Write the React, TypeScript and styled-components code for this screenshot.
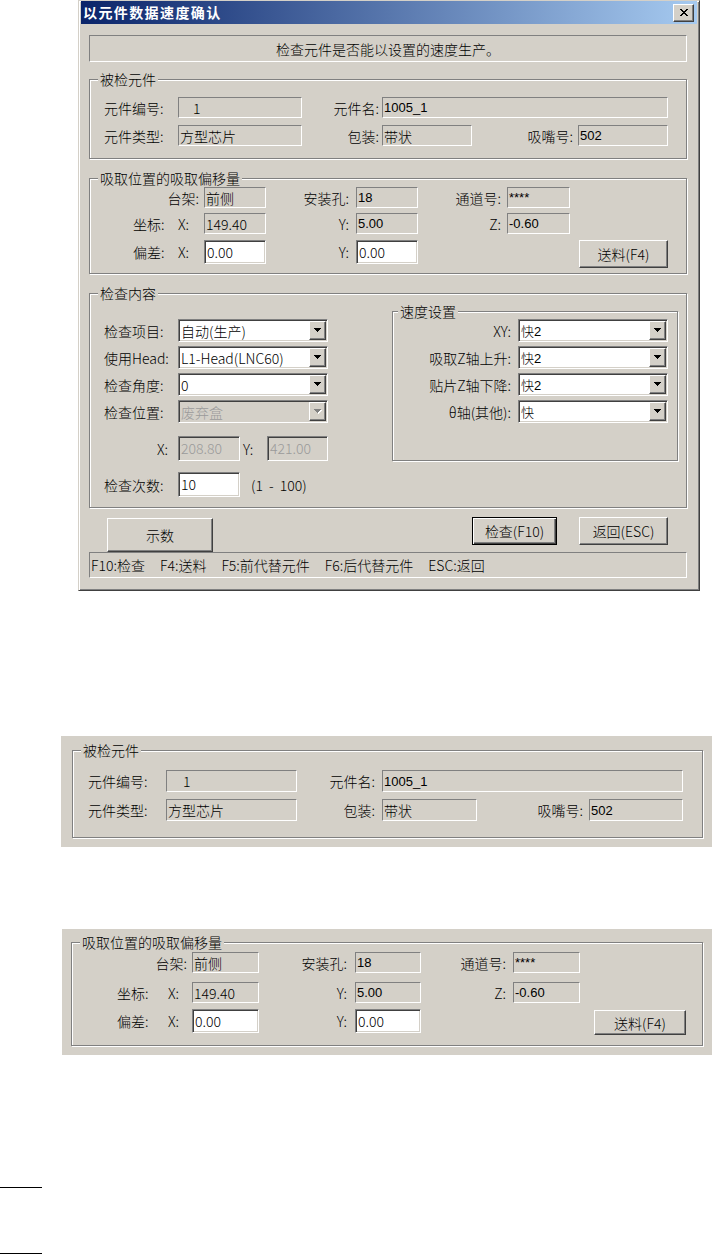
import React from "react";
import styled, { createGlobalStyle, css } from "styled-components";

const FACE = "#d4d0c8";
const GRAY = "#9a9a9a";
const SANS = `"Liberation Sans", "Noto Sans CJK SC", sans-serif`;

const GlobalStyle = createGlobalStyle`
  html, body { margin: 0; padding: 0; background: #fff; }
  body {
    font-family: "Noto Sans CJK SC", "Noto Sans CJK JP", sans-serif;
    font-size: 14px;
    font-weight: 300;
    color: #000;
  }
  * { box-sizing: border-box; }
`;

const raised = css`
  background: ${FACE};
  border: 1px solid;
  border-color: #fff #404040 #404040 #fff;
  box-shadow: inset -1px -1px 0 #808080;
`;

const sunkenThin = css`
  border: 1px solid;
  border-color: #808080 #fff #fff #808080;
`;

const sunken3d = css`
  border: 1px solid;
  border-color: #808080 #fff #fff #808080;
  box-shadow: inset 1px 1px 0 #404040, inset -1px -1px 0 ${FACE};
`;

const sansText = css`
  font-family: ${SANS};
  font-size: 13px;
`;

const Page = styled.div`
  display: flex;
  flex-direction: column;
  align-items: flex-start;
  width: 713px;
  min-height: 1254px;
`;

const Window = styled.div`
  margin-left: 78px;
  width: 622px;
  height: 591px;
  background: ${FACE};
  border: 1px solid;
  border-color: ${FACE} #404040 #404040 ${FACE};
  box-shadow: inset 1px 1px 0 #fff, inset -1px -1px 0 #808080;
  padding: 0 2px 2px 2px;
  display: flex;
  flex-direction: column;
`;

const TitleBar = styled.div`
  flex: none;
  height: 23px;
  background: linear-gradient(to right, #0a246a, #a6caf0);
  display: flex;
  align-items: center;
  justify-content: space-between;
  padding: 0 3px 0 2px;
`;

const TitleText = styled.div`
  color: #fff;
  font-weight: bold;
  font-size: 14px;
  letter-spacing: 1.4px;
  line-height: 23px;
  white-space: nowrap;
`;

const CloseButton = styled.div`
  ${raised};
  width: 21px;
  height: 18px;
  display: flex;
  align-items: center;
  justify-content: center;
`;

const Client = styled.div`
  flex: 1;
  display: flex;
  flex-direction: column;
  padding: 0 10px 0 8px;
`;

const Banner = styled.div`
  ${sunkenThin};
  flex: none;
  margin-top: 11px;
  height: 27px;
  display: flex;
  align-items: center;
  justify-content: center;
  white-space: nowrap;
`;

const Frame = styled.div<{ $w: number; $h: number; $mt?: number }>`
  flex: none;
  width: ${(p) => p.$w}px;
  height: ${(p) => p.$h}px;
  margin-top: ${(p) => p.$mt ?? 0}px;
  border: 1px solid #808080;
  box-shadow: inset 1px 1px 0 #fff, 1px 1px 0 #fff;
  display: flex;
  flex-direction: column;
`;

const Legend = styled.div<{ $ml: number }>`
  flex: none;
  align-self: flex-start;
  height: 16px;
  line-height: 16px;
  margin: -9px 0 -7px ${(p) => p.$ml}px;
  padding: 0 2px;
  background: ${FACE};
  white-space: nowrap;
`;

const GroupBody = styled.div<{ $pt: number; $pl?: number }>`
  display: flex;
  flex-direction: column;
  padding: ${(p) => p.$pt}px 0 0 ${(p) => p.$pl ?? 0}px;
`;

const Row = styled.div<{ $h: number; $mt?: number }>`
  flex: none;
  display: flex;
  align-items: flex-start;
  height: ${(p) => p.$h}px;
  margin-top: ${(p) => p.$mt ?? 0}px;
`;

const Label = styled.div<{ $w: number; $right?: boolean; $pl?: number; $pr?: number; $h?: number }>`
  flex: none;
  width: ${(p) => p.$w}px;
  height: ${(p) => (p.$h ? `${p.$h}px` : "100%")};
  display: flex;
  align-items: center;
  justify-content: ${(p) => (p.$right ? "flex-end" : "flex-start")};
  padding-left: ${(p) => p.$pl ?? 0}px;
  padding-right: ${(p) => p.$pr ?? 0}px;
  white-space: nowrap;
`;

const StaticField = styled.div<{ $w: number; $pl?: number; $sans?: boolean }>`
  ${sunkenThin};
  flex: none;
  width: ${(p) => p.$w}px;
  height: 100%;
  display: flex;
  align-items: center;
  padding-left: ${(p) => p.$pl ?? 1}px;
  white-space: nowrap;
  overflow: hidden;
  ${(p) => p.$sans && sansText}
`;

const Edit = styled.div<{ $w: number; $h: number; $disabled?: boolean }>`
  ${sunken3d};
  flex: none;
  width: ${(p) => p.$w}px;
  height: ${(p) => p.$h}px;
  background: ${(p) => (p.$disabled ? FACE : "#fff")};
  color: ${(p) => (p.$disabled ? GRAY : "#000")};
  display: flex;
  align-items: center;
  padding: 0 0 1px 2px;
  white-space: nowrap;
  overflow: hidden;
`;

const Spacer = styled.div<{ $w: number }>`
  flex: none;
  width: ${(p) => p.$w}px;
`;

const PushButton = styled.div<{ $w: number; $h: number; $mt?: number; $default?: boolean }>`
  ${raised};
  flex: none;
  width: ${(p) => p.$w}px;
  height: ${(p) => p.$h}px;
  margin-top: ${(p) => p.$mt ?? 0}px;
  display: flex;
  align-items: center;
  justify-content: center;
  white-space: nowrap;
  ${(p) =>
    p.$default &&
    css`
      border: 1px solid #000;
      box-shadow: inset 1px 1px 0 #fff, inset -1px -1px 0 #404040, inset -2px -2px 0 #808080;
    `}
`;

const ComboBox = styled.div<{ $w: number; $disabled?: boolean }>`
  ${sunken3d};
  flex: none;
  width: ${(p) => p.$w}px;
  height: 100%;
  padding: 1px;
  display: flex;
  background: ${(p) => (p.$disabled ? FACE : "#fff")};
`;

const ComboText = styled.div<{ $disabled?: boolean; $sans?: boolean }>`
  flex: 1;
  display: flex;
  align-items: center;
  padding-left: 1px;
  color: ${(p) => (p.$disabled ? GRAY : "#000")};
  white-space: nowrap;
  overflow: hidden;
  ${(p) => p.$sans && sansText}
`;

const ArrowButton = styled.div`
  ${raised};
  flex: none;
  width: 17px;
  display: flex;
  align-items: center;
  justify-content: center;
`;

const InspectBody = styled.div`
  display: flex;
  align-items: flex-start;
`;

const InspectLeft = styled.div`
  flex: none;
  width: 302px;
  display: flex;
  flex-direction: column;
  padding: 25px 0 0 14px;
`;

const Hint = styled.div`
  flex: none;
  height: 100%;
  display: flex;
  align-items: center;
  margin-left: 11px;
  white-space: pre;
  word-spacing: 3px;
`;

const ButtonRow = styled.div`
  flex: none;
  display: flex;
  align-items: flex-start;
  margin-top: 9px;
  height: 35px;
  padding: 0 19px 0 18px;
`;

const Grow = styled.div`
  flex: 1;
`;

const StatusBar = styled.div`
  ${sunkenThin};
  flex: none;
  height: 26px;
  display: flex;
  align-items: center;
  gap: 15px;
  padding-left: 1px;
  white-space: nowrap;
`;

const Snip = styled.div<{ $ml: number; $mt: number; $w: number; $h: number; $pt: number; $pl: number }>`
  flex: none;
  margin: ${(p) => p.$mt}px 0 0 ${(p) => p.$ml}px;
  width: ${(p) => p.$w}px;
  height: ${(p) => p.$h}px;
  background: ${FACE};
  padding: ${(p) => p.$pt}px 0 0 ${(p) => p.$pl}px;
  display: flex;
  flex-direction: column;
`;

const Rule = styled.div<{ $mt: number }>`
  flex: none;
  margin-top: ${(p) => p.$mt}px;
  width: 42px;
  height: 1px;
  background: #000;
`;

function CloseGlyph() {
  const px: [number, number, number][] = [
    [0, 0, 2], [6, 0, 2],
    [1, 1, 2], [5, 1, 2],
    [2, 2, 4],
    [3, 3, 2],
    [2, 4, 4],
    [1, 5, 2], [5, 5, 2],
    [0, 6, 2], [6, 6, 2],
  ];
  return (
    <svg width="8" height="7" viewBox="0 0 8 7" shapeRendering="crispEdges">
      {px.map(([x, y, w], i) => (
        <rect key={i} x={x} y={y} width={w} height={1} fill="#000" />
      ))}
    </svg>
  );
}

function ArrowGlyph({ disabled }: { disabled?: boolean }) {
  const rows: [number, number, number][] = [
    [0, 0, 7],
    [1, 1, 5],
    [2, 2, 3],
    [3, 3, 1],
  ];
  return (
    <svg width="8" height="5" viewBox="0 0 8 5" shapeRendering="crispEdges">
      {disabled &&
        rows.map(([x, y, w], i) => <rect key={`s${i}`} x={x + 1} y={y + 1} width={w} height={1} fill="#fff" />)}
      {rows.map(([x, y, w], i) => (
        <rect key={i} x={x} y={y} width={w} height={1} fill={disabled ? "#808080" : "#000"} />
      ))}
    </svg>
  );
}

function Combo({ w, value, disabled, sans }: { w: number; value: string; disabled?: boolean; sans?: boolean }) {
  return (
    <ComboBox $w={w} $disabled={disabled}>
      <ComboText $disabled={disabled} $sans={sans}>
        {value}
      </ComboText>
      <ArrowButton>
        <ArrowGlyph disabled={disabled} />
      </ArrowButton>
    </ComboBox>
  );
}

type InfoDims = {
  w: number; h: number; mt?: number; padT: number; padL: number; rowH: number; gap: number;
  lab1: number; fld1: number; lab2: number; lab2Pr: number; fld2: number; fld3: number;
  lab3: number; lab3Pr: number; fld4: number; idPl: number;
};

function InfoGroup({ d }: { d: InfoDims }) {
  return (
    <Frame $w={d.w} $h={d.h} $mt={d.mt}>
      <Legend $ml={8}>被检元件</Legend>
      <GroupBody $pt={d.padT} $pl={d.padL}>
        <Row $h={d.rowH}>
          <Label $w={d.lab1}>元件编号:</Label>
          <StaticField $w={d.fld1} $pl={d.idPl}>1</StaticField>
          <Label $w={d.lab2} $right $pr={d.lab2Pr}>元件名:</Label>
          <StaticField $w={d.fld2} $sans>1005_1</StaticField>
        </Row>
        <Row $h={d.rowH} $mt={d.gap}>
          <Label $w={d.lab1}>元件类型:</Label>
          <StaticField $w={d.fld1}>方型芯片</StaticField>
          <Label $w={d.lab2} $right $pr={d.lab2Pr}>包装:</Label>
          <StaticField $w={d.fld3}>带状</StaticField>
          <Label $w={d.lab3} $right $pr={d.lab3Pr}>吸嘴号:</Label>
          <StaticField $w={d.fld4} $sans>502</StaticField>
        </Row>
      </GroupBody>
    </Frame>
  );
}

type OffsetDims = {
  w: number; h: number; mt?: number; padT: number; rowH: number; gap1: number; gap2: number;
  row3H: number; inH: number; ab: number; abPr: number; a: number; aPl: number; b: number;
  c: number; d: number; dPr: number; e: number; f: number; fPr: number; g: number;
  hGap: number; btnW: number; btnH: number; btnMt: number;
};

function OffsetGroup({ d }: { d: OffsetDims }) {
  return (
    <Frame $w={d.w} $h={d.h} $mt={d.mt}>
      <Legend $ml={8}>吸取位置的吸取偏移量</Legend>
      <GroupBody $pt={d.padT}>
        <Row $h={d.rowH}>
          <Label $w={d.ab} $right $pr={d.abPr}>台架:</Label>
          <StaticField $w={d.c}>前侧</StaticField>
          <Label $w={d.d} $right $pr={d.dPr}>安装孔:</Label>
          <StaticField $w={d.e} $sans>18</StaticField>
          <Label $w={d.f} $right $pr={d.fPr}>通道号:</Label>
          <StaticField $w={d.g} $sans>****</StaticField>
        </Row>
        <Row $h={d.rowH} $mt={d.gap1}>
          <Label $w={d.a} $pl={d.aPl}>坐标:</Label>
          <Label $w={d.b}>X:</Label>
          <StaticField $w={d.c}>149.40</StaticField>
          <Label $w={d.d} $right $pr={d.dPr}>Y:</Label>
          <StaticField $w={d.e} $sans>5.00</StaticField>
          <Label $w={d.f} $right $pr={d.fPr}>Z:</Label>
          <StaticField $w={d.g} $sans>-0.60</StaticField>
        </Row>
        <Row $h={d.row3H} $mt={d.gap2}>
          <Label $w={d.a} $pl={d.aPl} $h={d.inH}>偏差:</Label>
          <Label $w={d.b} $h={d.inH}>X:</Label>
          <Edit $w={d.c} $h={d.inH}>0.00</Edit>
          <Label $w={d.d} $right $pr={d.dPr} $h={d.inH}>Y:</Label>
          <Edit $w={d.e} $h={d.inH}>0.00</Edit>
          <Spacer $w={d.f + d.g + d.hGap} />
          <PushButton $w={d.btnW} $h={d.btnH} $mt={d.btnMt}>送料(F4)</PushButton>
        </Row>
      </GroupBody>
    </Frame>
  );
}

const dialogInfo: InfoDims = {
  w: 598, h: 80, mt: 17, padT: 17, padL: 14, rowH: 21, gap: 7,
  lab1: 74, fld1: 124, lab2: 80, lab2Pr: 3, fld2: 286, fld3: 90, lab3: 106, lab3Pr: 5, fld4: 90, idPl: 14,
};

const snipInfo: InfoDims = {
  w: 631, h: 88, padT: 19, padL: 15, rowH: 22, gap: 7,
  lab1: 78, fld1: 131, lab2: 85, lab2Pr: 7, fld2: 301, fld3: 95, lab3: 112, lab3Pr: 6, fld4: 94, idPl: 16,
};

const dialogOffset: OffsetDims = {
  w: 598, h: 96, mt: 19, padT: 8, rowH: 21, gap1: 5, gap2: 6, row3H: 28, inH: 24,
  ab: 114, abPr: 5, a: 88, aPl: 43, b: 26, c: 62, d: 90, dPr: 7, e: 62, f: 89, fPr: 6, g: 63,
  hGap: 9, btnW: 89, btnH: 28, btnMt: 0,
};

const snipOffset: OffsetDims = {
  w: 632, h: 104, padT: 9, rowH: 21, gap1: 9, gap2: 6, row3H: 26, inH: 24,
  ab: 120, abPr: 5, a: 96, aPl: 45, b: 24, c: 67, d: 96, dPr: 8, e: 66, f: 92, fPr: 7, g: 67,
  hGap: 14, btnW: 92, btnH: 25, btnMt: 1,
};

const leftRows: { label: string; value: string; disabled?: boolean }[] = [
  { label: "检查项目:", value: "自动(生产)" },
  { label: "使用Head:", value: "L1-Head(LNC60)" },
  { label: "检查角度:", value: "0" },
  { label: "检查位置:", value: "废弃盒", disabled: true },
];

const speedRows: { label: string; value: string }[] = [
  { label: "XY:", value: "快2" },
  { label: "吸取Z轴上升:", value: "快2" },
  { label: "贴片Z轴下降:", value: "快2" },
  { label: "θ轴(其他):", value: "快" },
];

const statusItems = ["F10:检查", "F4:送料", "F5:前代替元件", "F6:后代替元件", "ESC:返回"];

export default function App() {
  return (
    <>
      <GlobalStyle />
      <Page>
        <Window>
          <TitleBar>
            <TitleText>以元件数据速度确认</TitleText>
            <CloseButton>
              <CloseGlyph />
            </CloseButton>
          </TitleBar>
          <Client>
            <Banner>检查元件是否能以设置的速度生产。</Banner>
            <InfoGroup d={dialogInfo} />
            <OffsetGroup d={dialogOffset} />
            <Frame $w={598} $h={215} $mt={19}>
              <Legend $ml={8}>检查内容</Legend>
              <InspectBody>
                <InspectLeft>
                  {leftRows.map((r, i) => (
                    <Row key={r.label} $h={23} $mt={i === 0 ? 0 : 4}>
                      <Label $w={74}>{r.label}</Label>
                      <Combo w={150} value={r.value} disabled={r.disabled} />
                    </Row>
                  ))}
                  <Row $h={25} $mt={13}>
                    <Label $w={74} $right $pr={10}>X:</Label>
                    <Edit $w={62} $h={25} $disabled>208.80</Edit>
                    <Label $w={27} $pl={3}>Y:</Label>
                    <Edit $w={61} $h={25} $disabled>421.00</Edit>
                  </Row>
                  <Row $h={25} $mt={11}>
                    <Label $w={74}>检查次数:</Label>
                    <Edit $w={62} $h={25}>10</Edit>
                    <Hint>(1 - 100)</Hint>
                  </Row>
                </InspectLeft>
                <Frame $w={286} $h={150} $mt={17}>
                  <Legend $ml={5}>速度设置</Legend>
                  <GroupBody $pt={7}>
                    {speedRows.map((r, i) => (
                      <Row key={r.label} $h={23} $mt={i === 0 ? 0 : 4}>
                        <Label $w={125} $right $pr={7}>{r.label}</Label>
                        <Combo w={150} value={r.value} sans />
                      </Row>
                    ))}
                  </GroupBody>
                </Frame>
              </InspectBody>
            </Frame>
            <ButtonRow>
              <PushButton $w={106} $h={34} $mt={1}>示数</PushButton>
              <Grow />
              <PushButton $w={85} $h={28} $default>检查(F10)</PushButton>
              <Spacer $w={22} />
              <PushButton $w={89} $h={28}>返回(ESC)</PushButton>
            </ButtonRow>
            <StatusBar>
              {statusItems.map((s) => (
                <span key={s}>{s}</span>
              ))}
            </StatusBar>
          </Client>
        </Window>

        <Snip $ml={61} $mt={145} $w={651} $h={111} $pt={14} $pl={11}>
          <InfoGroup d={snipInfo} />
        </Snip>

        <Snip $ml={62} $mt={82} $w={650} $h={126} $pt={13} $pl={9}>
          <OffsetGroup d={snipOffset} />
        </Snip>

        <Rule $mt={132} />
        <Rule $mt={65} />
      </Page>
    </>
  );
}
